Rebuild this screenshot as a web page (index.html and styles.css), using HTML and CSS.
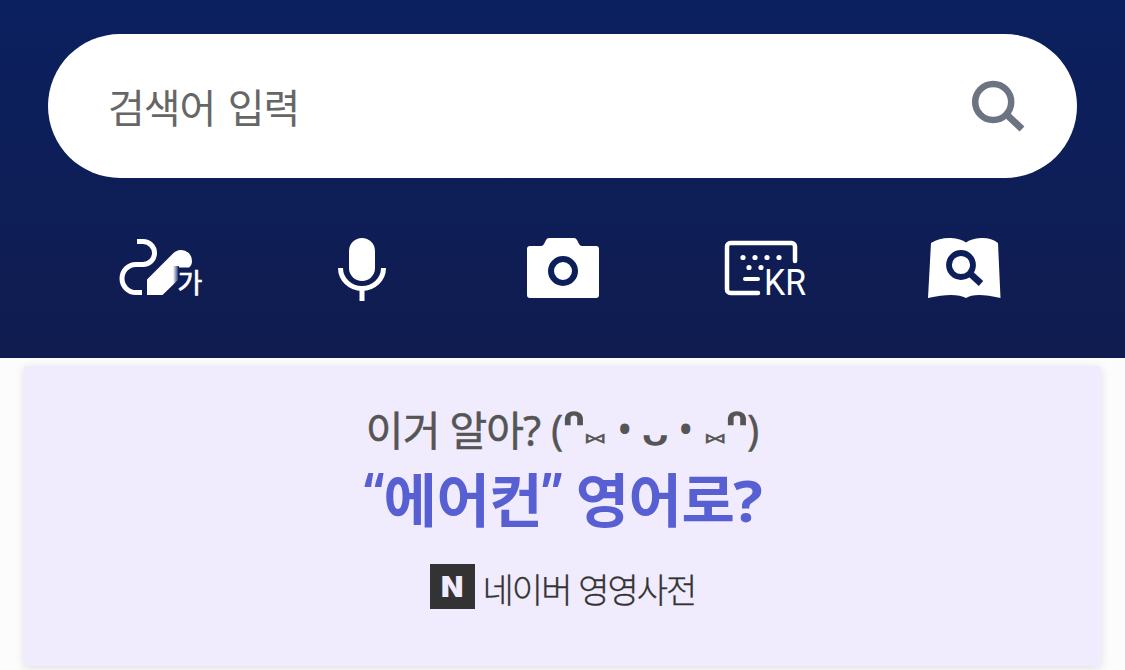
FILE: index.html
```
<!DOCTYPE html>
<html lang="ko">
<head>
  <meta charset="UTF-8">
  <title>사전</title>
  <link rel="stylesheet" href="styles.css">
</head>
<body>

  <header class="top">
    <div class="search">
      <span class="placeholder">검색어 입력</span>
      <svg class="search-icon" width="56" height="54" viewBox="0 0 56 54">
        <circle cx="24.200" cy="23" r="18" fill="none" stroke="#6c7383" stroke-width="6.500"/>
        <path d="M36.500 34.500L53 50" fill="none" stroke="#6c7383" stroke-width="7"/>
      </svg>
    </div>

    <nav class="tools">
      <!-- handwriting -->
      <svg width="110" height="85" viewBox="0 0 110 85">
        <defs>
          <linearGradient id="fade">
            <stop offset="0" stop-color="#0d1f5a" stop-opacity="0"/>
            <stop offset="1" stop-color="#0d1f5a"/>
          </linearGradient>
        </defs>
        <path d="M32 16.500h6a11.500 11.500 0 0 1 0 23H31a13.700 13.700 0 0 0 0 28h6" fill="none" stroke="#fff" stroke-width="5"/>
        <path d="M42 70V54.500L68 28.500A11 11 0 0 1 87 36Q87 40 84 42.500H73V55L57.500 70Z" fill="#fff"/>
        <rect x="68" y="41" width="6" height="20" fill="url(#fade)"/>
        <text class="ga" x="72.500" y="67.500">가</text>
      </svg>

      <!-- voice -->
      <svg width="90" height="85" viewBox="0 0 90 85">
        <rect x="29" y="13" width="26" height="43" rx="13" fill="#fff"/>
        <path d="M20.500 43a21.500 20.500 0 0 0 43 0M42 63.500V76" fill="none" stroke="#fff" stroke-width="5"/>
      </svg>

      <!-- camera -->
      <svg width="100" height="85" viewBox="0 0 100 85">
        <path d="M15 21h11q2 0 3-2l2-4q1-2 3-2h25q2 0 3 2l2 4q1 2 3 2h14q3 0 3 3v46q0 3-3 3H15q-3 0-3-3V24q0-3 3-3z" fill="#fff"/>
        <circle cx="48" cy="46" r="12" fill="none" stroke="#0d1f5a" stroke-width="6"/>
      </svg>

      <!-- keyboard -->
      <svg width="100" height="85" viewBox="0 0 100 85">
        <path d="M43 68H15.500a3.500 3.500 0 0 1-3.500-3.500V21.500a3.500 3.500 0 0 1 3.500-3.500H76.500a3.500 3.500 0 0 1 3.500 3.500V36" fill="none" stroke="#fff" stroke-width="4.500" stroke-linecap="round"/>
        <path d="M30 54H43" stroke="#fff" stroke-width="4" stroke-linecap="round"/>
        <g fill="#fff">
          <circle cx="28" cy="32.500" r="2.600"/>
          <circle cx="40" cy="32.500" r="2.600"/>
          <circle cx="52" cy="32.500" r="2.600"/>
          <circle cx="64" cy="32.500" r="2.600"/>
          <circle cx="34" cy="42.500" r="2.600"/>
          <circle cx="46" cy="42.500" r="2.600"/>
        </g>
        <text class="kr" x="49" y="70" textLength="42" lengthAdjust="spacingAndGlyphs">KR</text>
      </svg>

      <!-- open dictionary -->
      <svg width="100" height="85" viewBox="0 0 100 85">
        <path d="M16 18Q25 12.500 36 13Q46 13.500 51 17.500Q56 13.500 66 13Q76 12.500 83 18L85.500 73Q60 67 51 73Q40 67 13 73Z" fill="#fff"/>
        <circle cx="46" cy="40" r="12" fill="none" stroke="#0d1f5a" stroke-width="5.800"/>
        <path d="M54.500 48L66 58.500" fill="none" stroke="#0d1f5a" stroke-width="6.500"/>
      </svg>
    </nav>
  </header>

  <main>
    <section class="card">
      <p class="question">
        <span class="ask">이거 알아?</span>
        <span class="face"><i class="paren">(</i><i class="ear">ᐢ</i><i class="bow">⑅</i><i class="eye">•</i><i class="mouth">ᴗ</i><i class="eye">•</i><i class="bow">⑅</i><i class="ear">ᐢ</i><i class="paren">)</i></span>
      </p>
      <h1><span class="quote">“</span>에어컨<span class="quote">”</span> 영어로<span class="mark">?</span></h1>
      <p class="source"><b class="logo">N</b><span class="name">네이버 영영사전</span></p>
    </section>
  </main>

</body>
</html>
```

FILE: styles.css
```
* { box-sizing: border-box; }
body { margin: 0; height: 670px; overflow: hidden; background: #fcfcfc; font-family: "Noto Sans", "Noto Sans CJK KR", sans-serif; }
p, h1 { margin: 0; white-space: nowrap; }
i { font-style: normal; }

.top { height: 358px; padding: 34px 48px 0; background: linear-gradient(#0b205f, #101c50); }
.search { display: flex; align-items: center; justify-content: space-between; height: 144px; padding: 0 52px 0 60px; border-radius: 72px; background: #fff; }
.placeholder { padding-top: 3px; font-size: 40px; line-height: 60px; letter-spacing: -1px; word-spacing: 3px; color: #666; }
.tools { display: flex; gap: 100px; margin-top: 47px; padding-left: 57px; }
.tools svg { flex: none; }
.tools svg:nth-child(-n+2) { margin-right: 5px; }
.ga { font-size: 27px; font-weight: 400; fill: #fff; stroke: #fff; stroke-width: 0.7px; }
.kr { font-family: Roboto, sans-serif; font-size: 36px; fill: #fff; }

main { padding: 8px 24px 0; }
.card { display: flex; flex-direction: column; align-items: center; height: 300px; padding-top: 33px; border-radius: 2px; background: #f0ecfd; box-shadow: 0 2px 10px rgba(0, 0, 0, 0.12); }
.question { display: flex; height: 62px; line-height: 62px; font-size: 41px; color: #555; }
.ask { letter-spacing: -0.8px; -webkit-text-stroke: 0.5px #555; }
.face { display: flex; margin-left: 11px; }
.face i { display: flex; justify-content: center; line-height: 60px; }
.paren { width: 12px; -webkit-text-stroke: 0.3px #555; }
.ear { width: 21px; transform: translateY(-5px) scale(1.45, 1.1); -webkit-text-stroke: 1.5px #555; }
.bow { width: 22px; transform: translateY(7px) scale(0.9, 0.7); -webkit-text-stroke: 0.6px #555; }
.eye { width: 37px; transform: translateY(-1px); }
.mouth { width: 24px; transform: translateY(3px) scaleY(0.8); -webkit-text-stroke: 2px #555; }
h1 { height: 78px; line-height: 78px; font-size: 58px; font-weight: 700; letter-spacing: -0.5px; word-spacing: -1px; color: #575fd2; }
.quote { display: inline-block; width: 20px; transform: translateY(-8px) scaleX(0.78); transform-origin: left; }
.mark { display: inline-block; transform: scaleX(1.06); }
.source { display: flex; align-items: center; height: 45px; margin-top: 25px; font-size: 34px; font-weight: 300; letter-spacing: -2px; color: #333; }
.name { padding-top: 3px; word-spacing: 1px; -webkit-text-stroke: 0.3px #333; }
.logo { display: flex; align-items: center; justify-content: center; width: 45px; height: 45px; margin-right: 8px; background: #333; font: 900 29px Inter, sans-serif; letter-spacing: 0; color: #f0ecfd; }
```
